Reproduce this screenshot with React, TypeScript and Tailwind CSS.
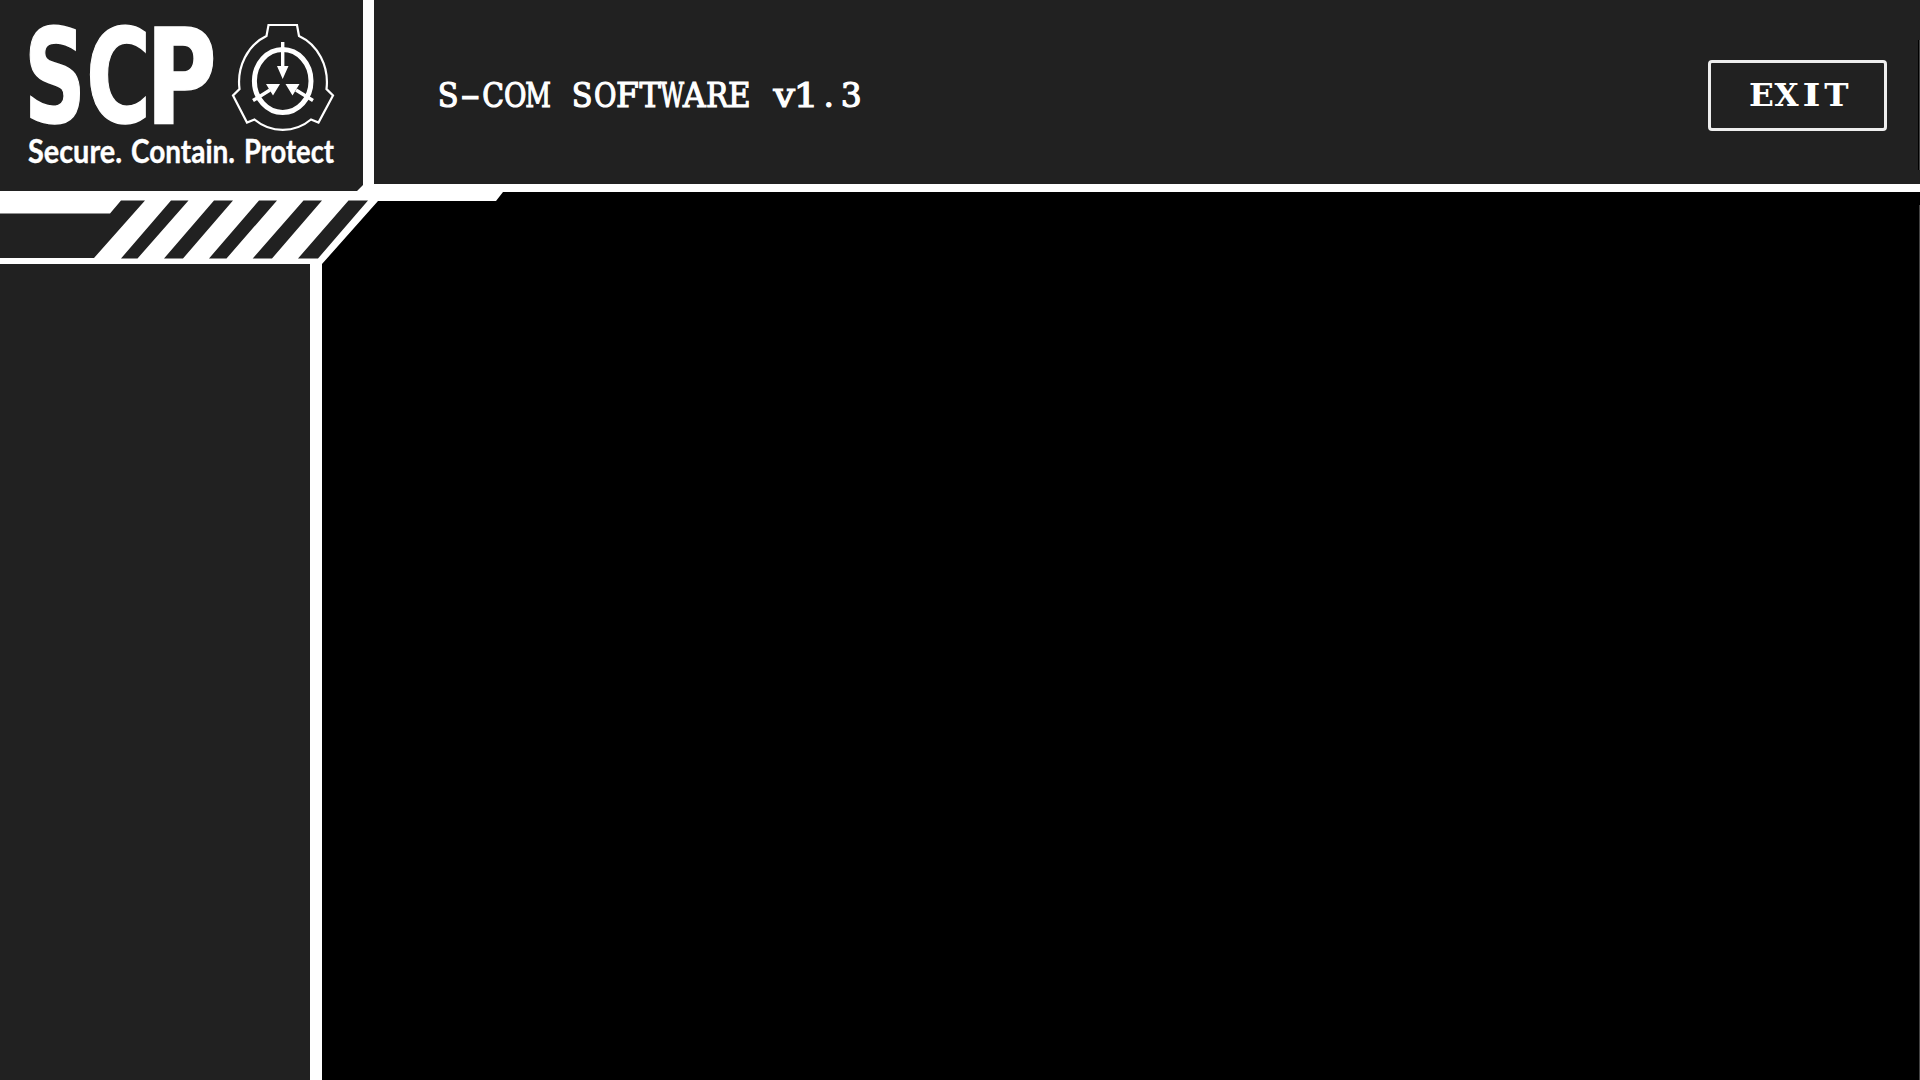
type LetteringProps = { text: string; cell: string; className: string; widths: Record<string, string> };

const titleWidths: Record<string, string> = {
  S: "scale-x-[0.92]",
  "-": "scale-x-[1.75]",
  C: "scale-x-[0.86]",
  O: "scale-x-[0.83]",
  M: "scale-x-[0.76]",
  F: "scale-x-[1]",
  T: "scale-x-[0.97]",
  W: "scale-x-[0.7]",
  A: "scale-x-[0.95]",
  R: "scale-x-[0.9]",
  E: "scale-x-[0.94]",
  v: "scale-x-[1.15]",
  "1": "scale-x-[1.2]",
};

const exitWidths: Record<string, string> = {
  E: "scale-x-[1.02]",
  X: "scale-x-[0.97]",
  I: "scale-x-[1.2]",
  T: "scale-x-[1.02]",
};

/* Typewriter lettering: every glyph is fitted to a cell of the same width. */
function Lettering({ text, cell, className, widths }: LetteringProps) {
  return (
    <span className={`inline-flex whitespace-pre leading-none ${className}`}>
      {text.split("").map((c, i) => (
        <span key={i} className={`flex justify-center ${cell} ${widths[c] ?? ""}`}>
          {c}
        </span>
      ))}
    </span>
  );
}

function Emblem() {
  return (
    <g fill="none" stroke="#fff">
      <path
        strokeWidth="2.200"
        d="M268.500 25H297L299 36A45 50 0 0 1 326.500 89L333 95.500L318.500 122.500L311 119.500A43 42 0 0 1 254.500 119.500L247 122.500L233 95.500L239.500 89A45 50 0 0 1 266.500 36Z"
      />
      <ellipse cx="282.700" cy="81" rx="28.300" ry="31.500" strokeWidth="5" />
      <path strokeWidth="3.400" d="M282.700 42V68M253 100.500L270 90M313 100.500L296 90" />
      <path
        fill="#fff"
        stroke="none"
        d="M277 66H288.500L282.700 79ZM266 84H280L273 95.500ZM285.500 84H299.500L292.500 95.500Z"
      />
    </g>
  );
}

function Logo() {
  return (
    <svg viewBox="0 0 363 184" className="h-[184px] w-[363px] overflow-visible" fill="#fff">
      <g fontFamily="DejaVu Sans, sans-serif" fontWeight="700" fontSize="132" stroke="#fff" strokeWidth="1.500">
        <text transform="translate(24 121.500) scale(.65 .99)">S</text>
        <text transform="translate(86 121.500) scale(.67 .99)">C</text>
        <text transform="translate(146 122.500) scale(.73 1)">P</text>
      </g>
      <Emblem />
      <text y="163" fontFamily="Lato, sans-serif" fontWeight="700" fontSize="33" stroke="#fff" strokeWidth=".4">
        <tspan x="28" textLength="94" lengthAdjust="spacingAndGlyphs">Secure.</tspan>
        <tspan x="131" textLength="104" lengthAdjust="spacingAndGlyphs">Contain.</tspan>
        <tspan x="244" textLength="90" lengthAdjust="spacingAndGlyphs">Protect</tspan>
      </text>
    </svg>
  );
}

function HazardStrip() {
  return (
    <svg viewBox="0 184 520 80" className="absolute left-0 top-[184px] h-[80px] w-[520px]">
      <path fill="#fff" d="M0 191H357L363 185V184H520V192H503L496 201H378L322 264H0Z" />
      <path
        fill="#212121"
        d="M0 213.500H110L121 200.500H145L94 258H0ZM171 200.500H188.500L137.500 258.500H121ZM214 200.500H233L183 258.500H164ZM259 200.500H277L226.500 258.500H209ZM303.500 200.500H322L272 258.500H252.700ZM348.500 200.500H368L318 258.500H298ZM0 184H363V185L357 191H0Z"
      />
    </svg>
  );
}

export default function App() {
  return (
    <div className="relative flex h-[1080px] w-[1920px] flex-col overflow-hidden bg-black text-white">
      <header className="flex h-[192px] border-b-8 border-white bg-[#212121]">
        <div className="w-[374px] border-r-[11px] border-white">
          <Logo />
        </div>
        <div className="flex flex-1 items-center justify-between pl-[63px] pr-[31px]">
          <h1 className="pt-[7px]">
            <Lettering
              text="S-COM SOFTWARE v1.3"
              cell="w-[22.4px]"
              widths={titleWidths}
              className="font-['DejaVu_Serif'] text-[33px] [-webkit-text-stroke:1.2px_white]"
            />
          </h1>
          <button className="mt-[6px] flex h-[71px] w-[179px] items-center justify-center rounded-[4px] border-[3px] border-[#eee]">
            <Lettering
              text="EXIT"
              cell="w-[25px]"
              widths={exitWidths}
              className="pl-[3px] font-['DejaVu_Serif'] text-[32px] font-bold"
            />
          </button>
        </div>
        <div className="mt-10 h-[130px] w-[2px] border-r border-[#444] bg-black" />
      </header>
      <div className="flex flex-1">
        <aside className="w-[322px] border-r-[12px] border-white bg-[#212121]" />
        <main className="mt-[13px] flex-1 border-r border-[#444] bg-black" />
      </div>
      <HazardStrip />
    </div>
  );
}
